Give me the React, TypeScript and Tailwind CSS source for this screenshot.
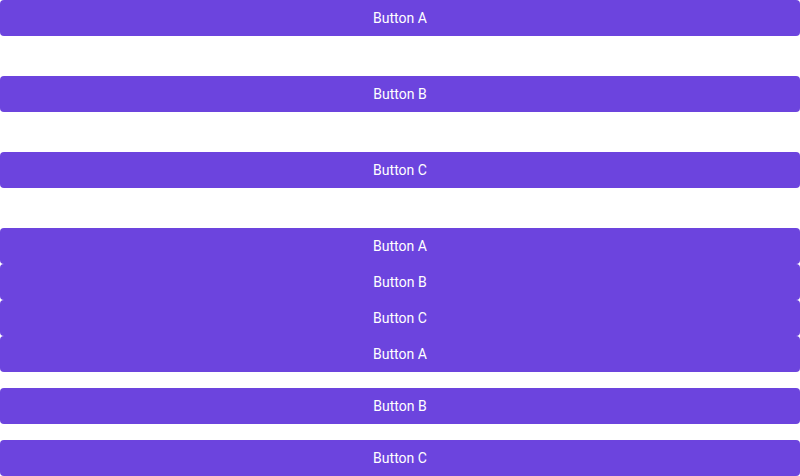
import React from "react";

function Btn({ label }: { label: string }) {
  return (
    <button className="w-full h-9 rounded bg-[#6c44de] text-white text-sm flex items-center justify-center [font-family:Roboto,sans-serif]">
      {label}
    </button>
  );
}

export default function App() {
  return (
    <div className="w-[800px] h-[476px] bg-white flex flex-col overflow-hidden">
      <div className="flex flex-col gap-10">
        <Btn label="Button A" />
        <Btn label="Button B" />
        <Btn label="Button C" />
        <div className="flex flex-col">
          <Btn label="Button A" />
          <Btn label="Button B" />
          <Btn label="Button C" />
          <Btn label="Button A" />
        </div>
      </div>
      <div className="flex flex-col gap-4 mt-4">
        <Btn label="Button B" />
        <Btn label="Button C" />
      </div>
    </div>
  );
}
